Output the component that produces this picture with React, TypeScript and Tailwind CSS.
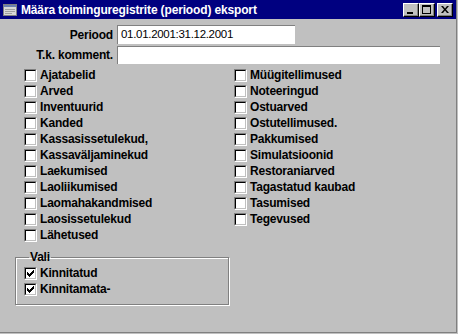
import React from 'react';

const leftItems = [
  'Ajatabelid',
  'Arved',
  'Inventuurid',
  'Kanded',
  'Kassasissetulekud,',
  'Kassaväljaminekud',
  'Laekumised',
  'Laoliikumised',
  'Laomahakandmised',
  'Laosissetulekud',
  'Lähetused',
];

const rightItems = [
  'Müügitellimused',
  'Noteeringud',
  'Ostuarved',
  'Ostutellimused.',
  'Pakkumised',
  'Simulatsioonid',
  'Restoraniarved',
  'Tagastatud kaubad',
  'Tasumised',
  'Tegevused',
];

function Box({ checked }: { checked?: boolean }) {
  return (
    <span className="relative block w-[13px] h-[13px] shrink-0 bg-white border border-t-[#808080] border-l-[#808080] border-b-white border-r-white">
      <span className="absolute inset-0 border border-t-black border-l-black border-b-[#c0c0c0] border-r-[#c0c0c0]" />
      {checked && (
        <svg className="absolute left-[1px] top-[1px]" width="9" height="9" viewBox="0 0 9 9">
          <path d="M1 3v3h1v1h1v1h1v-1h1v-1h1v-1h1v-1h1v-3h-1v1h-1v1h-1v1h-1v1h-1v-1h-1v-1z" fill="black" />
        </svg>
      )}
    </span>
  );
}

function Check({ label, checked }: { label: string; checked?: boolean }) {
  return (
    <div className="h-[16px] flex items-center gap-[3px]">
      <Box checked={checked} />
      <span className="leading-none whitespace-nowrap">{label}</span>
    </div>
  );
}

function CaptionButton({ children, className = '' }: { children: React.ReactNode; className?: string }) {
  return (
    <div
      className={`w-[16px] h-[14px] bg-[#c0c0c0] border border-t-white border-l-white border-b-black border-r-black shadow-[inset_-1px_-1px_0_#808080] flex ${className}`}
    >
      {children}
    </div>
  );
}

export default function App() {
  return (
    <div className="w-[458px] h-[334px] bg-[#c0c0c0] font-['Liberation_Sans',Arial,sans-serif] text-black text-[12px] tracking-[-0.2px] font-bold overflow-hidden">
      <div className="w-[457px] h-[333px] border-r border-b border-[#808080] flex flex-col">
        {/* title bar */}
        <div className="h-[19px] w-[456px] bg-[#000080] flex items-center pl-[3px] pr-[3px]">
          <svg width="14" height="13" viewBox="0 0 14 13" className="shrink-0">
            <rect x="0.5" y="1.5" width="13" height="11" fill="#d8d8d8" stroke="#808080" />
            <rect x="1" y="2" width="12" height="2" fill="#6a7fb0" />
            <rect x="2" y="6" width="10" height="1" fill="#a0a0a0" />
            <rect x="2" y="8" width="10" height="1" fill="#a0a0a0" />
            <rect x="2" y="10" width="7" height="1" fill="#a0a0a0" />
          </svg>
          <span className="ml-[4px] text-white whitespace-nowrap leading-none tracking-[-0.15px]">
            Määra toiminguregistrite (periood) eksport
          </span>
          <div className="ml-auto flex items-center">
            <CaptionButton>
              <svg width="14" height="12" viewBox="0 0 14 12">
                <rect x="3" y="8" width="6" height="2" fill="black" />
              </svg>
            </CaptionButton>
            <CaptionButton>
              <svg width="14" height="12" viewBox="0 0 14 12">
                <rect x="2.5" y="1.5" width="8" height="8" fill="none" stroke="black" />
                <rect x="2" y="1" width="9" height="2" fill="black" />
              </svg>
            </CaptionButton>
            <CaptionButton className="ml-[2px]">
              <svg width="14" height="12" viewBox="0 0 14 12">
                <path d="M3 2h2l2 2.5 2-2.5h2l-3 3.5 3 3.5h-2l-2-2.5-2 2.5h-2l3-3.5z" fill="black" />
              </svg>
            </CaptionButton>
          </div>
        </div>

        {/* form fields */}
        <div className="mt-[6px] flex flex-col gap-[2px]">
          <div className="flex items-center">
            <span className="w-[113px] text-right leading-none">Periood</span>
            <div className="ml-[4px] w-[178px] h-[19px] bg-white border-t border-l border-[#808080] flex items-center pl-[3px]">
              <span className="font-normal text-[11.5px] tracking-[-0.3px] leading-none">01.01.2001:31.12.2001</span>
            </div>
          </div>
          <div className="flex items-center">
            <span className="w-[113px] text-right leading-none">T.k. komment.</span>
            <div className="ml-[4px] w-[323px] h-[18px] bg-white border-t border-l border-[#808080]" />
          </div>
        </div>

        {/* register checkboxes */}
        <div className="mt-[3px] flex">
          <div className="w-[234px] pl-[24px] flex flex-col">
            {leftItems.map((item) => (
              <Check key={item} label={item} />
            ))}
          </div>
          <div className="flex flex-col">
            {rightItems.map((item) => (
              <Check key={item} label={item} />
            ))}
          </div>
        </div>

        {/* Vali group */}
        <fieldset className="mt-[7px] ml-[15px] w-[214px] border border-[#808080] shadow-[inset_1px_1px_0_white,1px_1px_0_white] pl-[8px] pb-[7px]">
          <legend className="ml-[5px] px-[1px] leading-[14px]">Vali</legend>
          <div className="pt-[1px] flex flex-col">
            <Check label="Kinnitatud" checked />
            <Check label="Kinnitamata-" checked />
          </div>
        </fieldset>
      </div>
    </div>
  );
}
